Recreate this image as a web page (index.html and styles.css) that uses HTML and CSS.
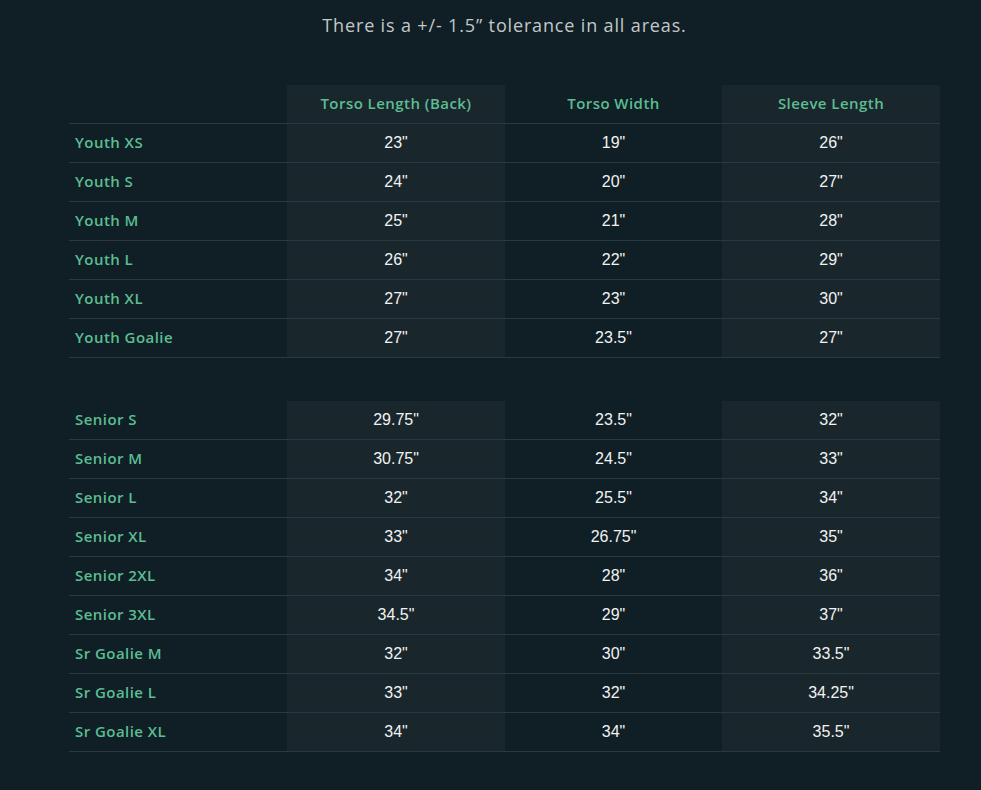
FILE: index.html
```html
<!DOCTYPE html>
<html lang="en">
<head>
<meta charset="utf-8">
<title>Size chart</title>
<link rel="stylesheet" href="styles.css">
</head>
<body>
<main class="page">
  <p class="note">There is a +/- 1.5” tolerance in all areas.</p>
  <table class="chart">
    <colgroup><col class="c-label"><col class="c-shade"><col class="c-plain"><col class="c-shade"></colgroup>
    <thead>
      <tr><th></th><th>Torso Length (Back)</th><th>Torso Width</th><th>Sleeve Length</th></tr>
    </thead>
    <tbody>
      <tr><td>Youth XS</td><td>23"</td><td>19"</td><td>26"</td></tr>
      <tr><td>Youth S</td><td>24"</td><td>20"</td><td>27"</td></tr>
      <tr><td>Youth M</td><td>25"</td><td>21"</td><td>28"</td></tr>
      <tr><td>Youth L</td><td>26"</td><td>22"</td><td>29"</td></tr>
      <tr><td>Youth XL</td><td>27"</td><td>23"</td><td>30"</td></tr>
      <tr><td>Youth Goalie</td><td>27"</td><td>23.5"</td><td>27"</td></tr>
    </tbody>
  </table>
  <table class="chart chart-second">
    <colgroup><col class="c-label"><col class="c-shade"><col class="c-plain"><col class="c-shade"></colgroup>
    <tbody>
      <tr><td>Senior S</td><td>29.75"</td><td>23.5"</td><td>32"</td></tr>
      <tr><td>Senior M</td><td>30.75"</td><td>24.5"</td><td>33"</td></tr>
      <tr><td>Senior L</td><td>32"</td><td>25.5"</td><td>34"</td></tr>
      <tr><td>Senior XL</td><td>33"</td><td>26.75"</td><td>35"</td></tr>
      <tr><td>Senior 2XL</td><td>34"</td><td>28"</td><td>36"</td></tr>
      <tr><td>Senior 3XL</td><td>34.5"</td><td>29"</td><td>37"</td></tr>
      <tr><td>Sr Goalie M</td><td>32"</td><td>30"</td><td>33.5"</td></tr>
      <tr><td>Sr Goalie L</td><td>33"</td><td>32"</td><td>34.25"</td></tr>
      <tr><td>Sr Goalie XL</td><td>34"</td><td>34"</td><td>35.5"</td></tr>
    </tbody>
  </table>
</main>
</body>
</html>
```
FILE: styles.css
```css
html, body {
  margin: 0;
  padding: 0;
  background: #0f1f25;
  height: 100%;
}
.page {
  padding: 0 41px 0 69px;
}
.note {
  margin: 0;
  padding-top: 13px;
  height: 85px;
  box-sizing: border-box;
  text-align: center;
  font-family: "Open Sans", "Liberation Sans", sans-serif;
  font-size: 18px;
  letter-spacing: 0.85px;
  color: #c3c7c9;
  line-height: 24px;
}
.chart {
  width: 871px;
  border-collapse: collapse;
  table-layout: fixed;
}
.chart-second {
  margin-top: 43px;
}
.c-label { width: 218px; }
.c-shade { width: 218px; background: #19272d; }
.c-plain { width: 217px; }
.chart th, .chart td {
  height: 36px;
  padding: 1px 6px;
  border-bottom: 1px solid #2a393f;
  text-align: center;
  vertical-align: middle;
}
.chart th {
  font-family: "Open Sans", "Liberation Sans", sans-serif;
  font-weight: 600;
  font-size: 15px;
  letter-spacing: 0.45px;
  color: #5cbd92;
  padding: 0 6px 2px;
}
.chart td {
  font-family: "Liberation Sans", Arial, sans-serif;
  font-size: 16px;
  color: #f2f2f2;
}
.chart td:first-child {
  text-align: left;
  font-family: "Open Sans", "Liberation Sans", sans-serif;
  font-weight: 600;
  font-size: 15px;
  letter-spacing: 0.45px;
  color: #5cbd92;
  padding: 0 6px 2px;
}
```
